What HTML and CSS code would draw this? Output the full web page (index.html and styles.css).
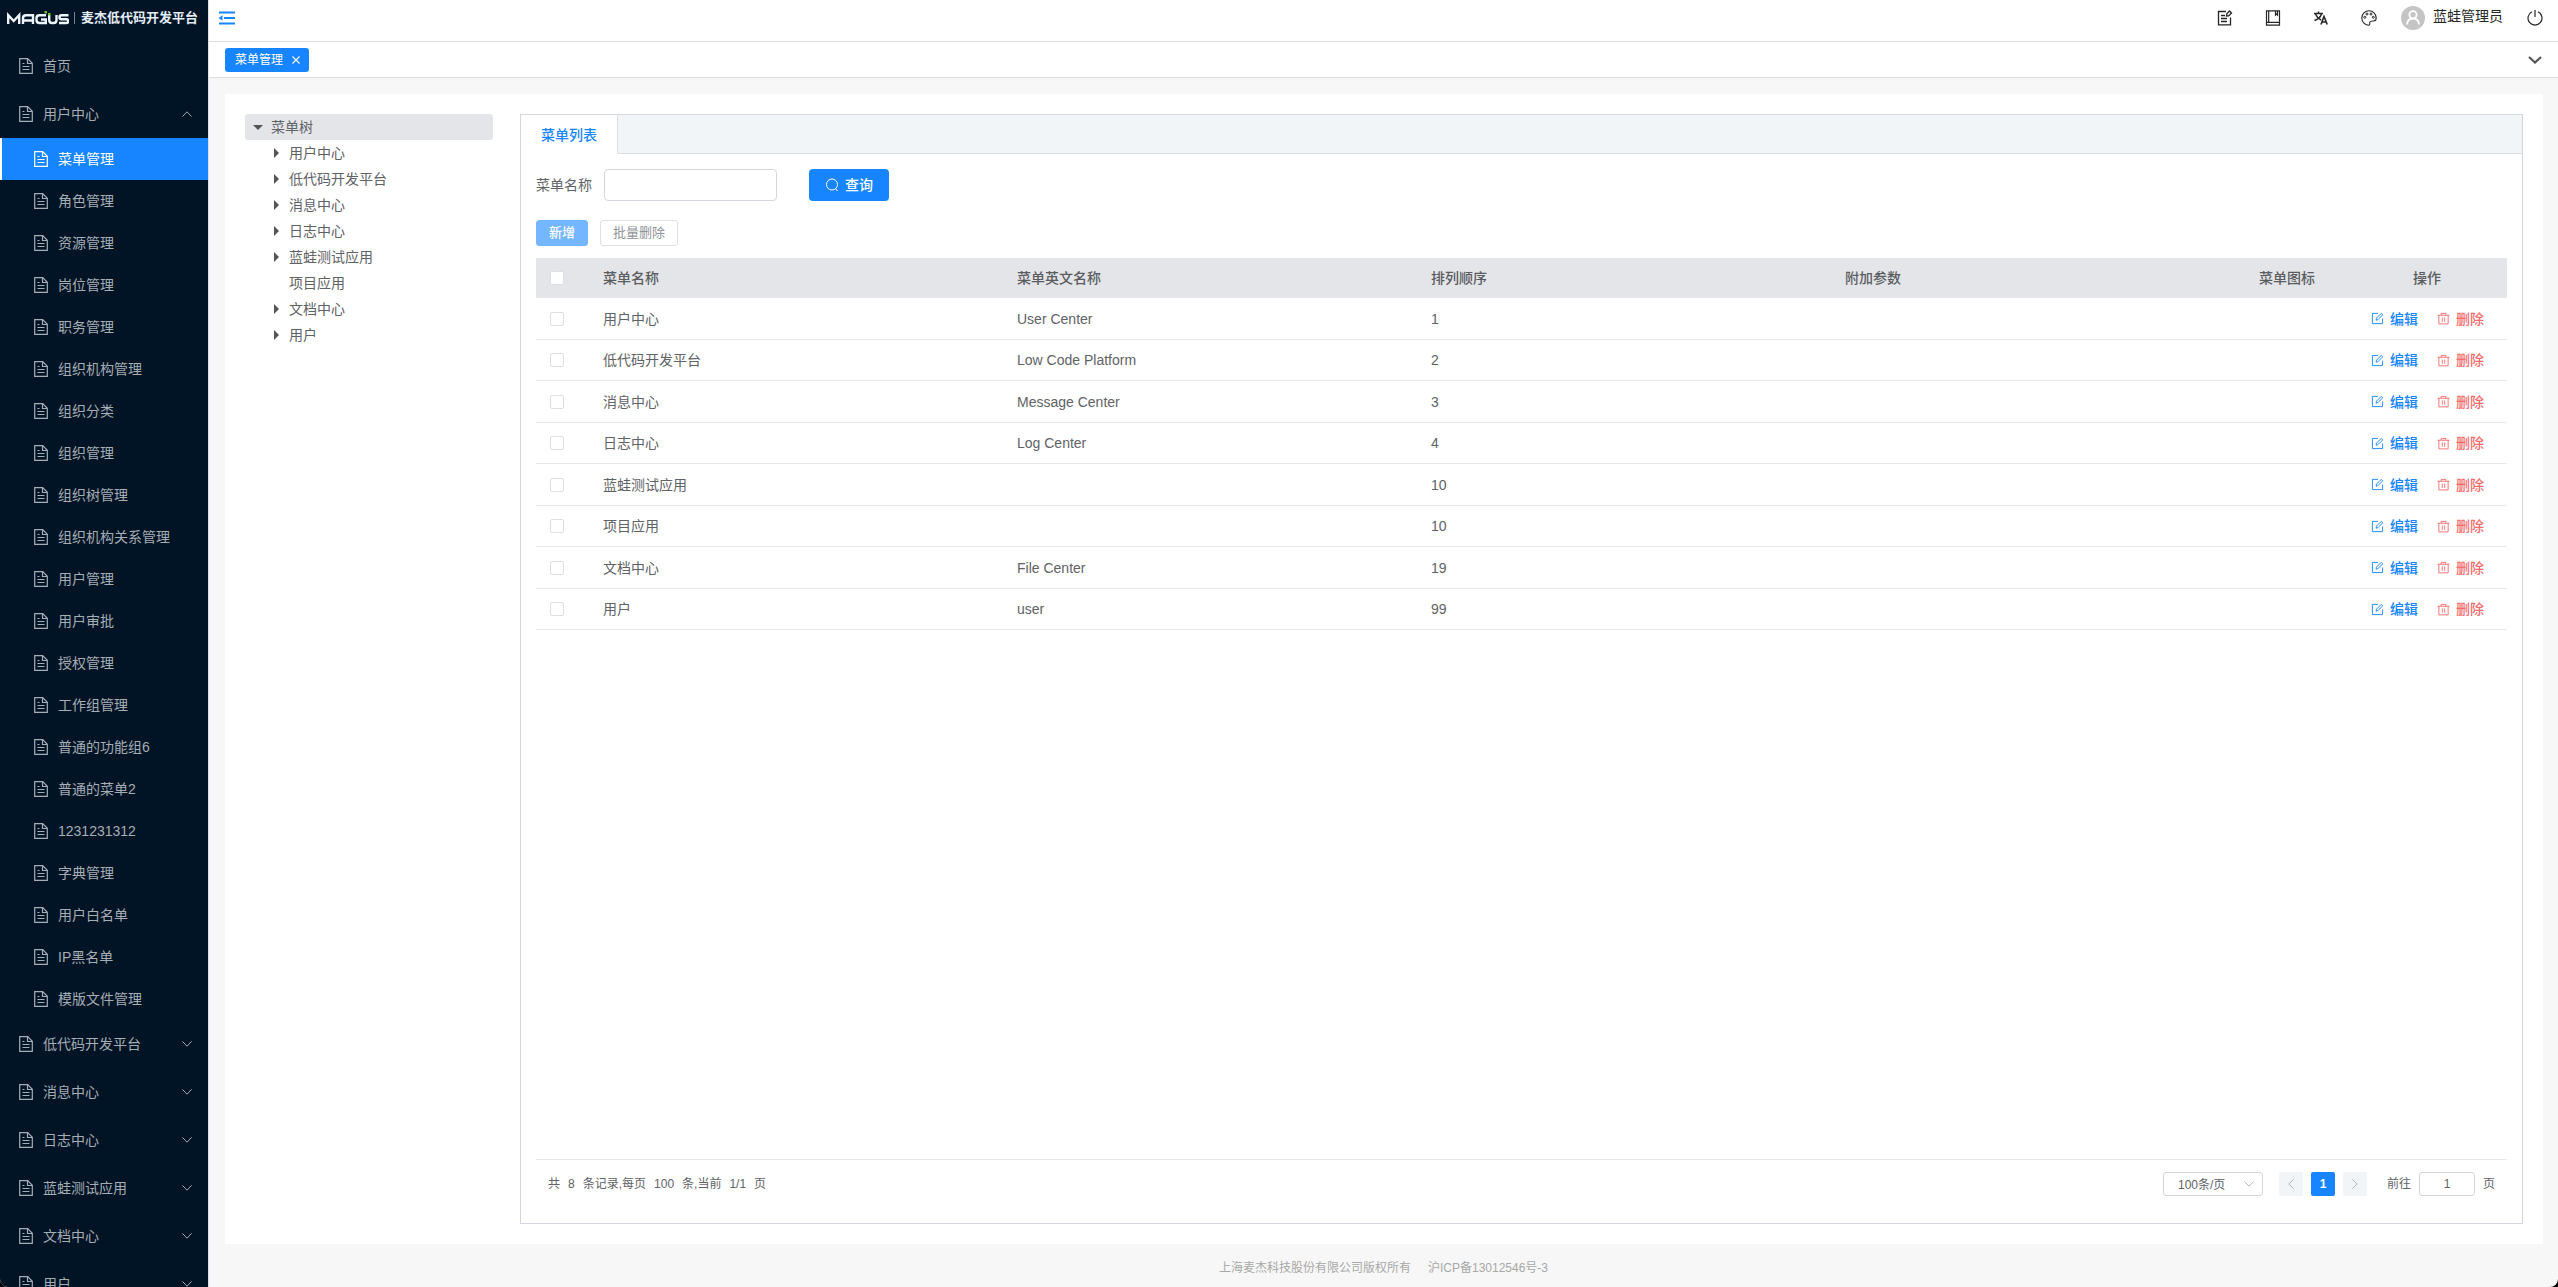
FILE: index.html
```html
<!DOCTYPE html>
<html lang="zh-CN">
<head>
<meta charset="utf-8">
<title>菜单管理</title>
<link rel="stylesheet" href="styles.css">
</head>
<body>
<svg class="sprite" aria-hidden="true">
  <symbol id="doc" viewBox="0 0 16 18"><path d="M1.700 1.700h8l4.600 4.600v10H1.700zM9.500 1.700v4.800h4.800M4.500 6.500h2M4.500 9.500h7M4.500 12.500h7" fill="none" stroke="currentColor" stroke-width="1.200"/></symbol>
  <symbol id="down" viewBox="0 0 12 12"><path d="M1.500 3.500 6 8.200l4.500-4.700" fill="none" stroke="currentColor"/></symbol>
  <symbol id="edit" viewBox="0 0 14 14"><path d="M7.500 1.500h-6v11h11V7M5.500 8.800l.4-2.200L11 1.500l1.600 1.600-5.200 5.200z" fill="none" stroke="currentColor"/></symbol>
  <symbol id="trash" viewBox="0 0 14 14"><path d="M.5 3.500h13M4.500 3.500v-2h5v2M2 3.500v9.300h10V3.500M5.700 6v4.500M8.300 6v4.500" fill="none" stroke="currentColor"/></symbol>
</svg>
<div class="app">
  <aside class="sidebar">
    <div class="logo">
      <svg class="mark" viewBox="0 0 62 14" aria-label="MAGUS"><g fill="none" stroke="#eef4fb" stroke-width="2.400"><path d="M1.200 13V4l5.500 6 5.500-6v9M16 13V7q0-2.800 3-2.800h7V13M16 9.500h10M39 4.200h-6.500q-3 0-3 3v1.800q0 3 3 3h6.300V8.500H34M42.200 4v5q0 3 3 3h1.300q3 0 3-3V4M61.500 4.200h-7q-2 0-2 2t2 2h4.800q2 0 2 1.900t-2 1.900H52"/></g><path d="M37.500 0h2.500v2.500h-2.500zM41 2h2.500v2.500H41z" fill="#6cc02a"/></svg>
      <span class="bar"></span><span class="brand">麦杰低代码开发平台</span>
    </div>
    <nav id="nav"></nav>
  </aside>
  <div class="main">
    <header class="topbar">
      <button class="plain fold" aria-label="收起菜单"><svg width="18" height="14" viewBox="0 0 18 14"><path d="M1 1.500h16M6 7h11M1 12.500h16" stroke="currentColor" stroke-width="2.200"/><path d="M0.500 7 4.500 4.300v5.400z" fill="currentColor"/></svg></button>
      <div class="tools">
        <button class="plain" aria-label="编辑"><svg width="16" height="16" viewBox="0 0 16 16"><path d="M9 1.500H1.500v13.300h12V7.500M4 5.500h4M4 8.500h6M4 11.500h6M9.500 6l.3-2.200L12.500 1l2 2-2.800 2.800z" fill="none" stroke="currentColor" stroke-width="1.300"/></svg></button>
        <button class="plain" aria-label="文档"><svg width="16" height="16" viewBox="0 0 16 16"><path d="M1.500.8h13v14.400h-13zM3.700.8v11.500M1.500 12.300h13M10.500 1v4l1-1 1 1V1" fill="none" stroke="currentColor" stroke-width="1.200"/></svg></button>
        <button class="plain" aria-label="语言"><svg width="16" height="16" viewBox="0 0 16 16"><path d="M1 3.500h9M5.500 1.500v2M2.500 4q1.500 4 5.500 6M8.500 4Q7 8.500 1.500 10.500" fill="none" stroke="currentColor" stroke-width="1.500"/><path d="m8 14.500 3-8 3.200 8M9 12h4.200" fill="none" stroke="currentColor" stroke-width="1.600"/></svg></button>
        <button class="plain" aria-label="主题"><svg width="16" height="16" viewBox="0 0 16 16"><path d="M8 .8a7.200 7.200 0 1 0 0 14.400c1.500-.5.500-2 .8-3 .5-1.500 2.200-1.200 3.700-1.200 1.700 0 2.700-1 2.700-3A7.200 7.200 0 0 0 8 .8z" fill="none" stroke="currentColor" stroke-width="1.100"/><g fill="none" stroke="currentColor"><circle cx="3.800" cy="7.300" r="1"/><circle cx="6" cy="4" r="1"/><circle cx="10" cy="4" r="1"/><circle cx="12.300" cy="7.300" r="1"/></g></svg></button>
        <div class="user"><svg width="24" height="24" viewBox="0 0 24 24"><circle cx="12" cy="12" r="12" fill="#c4c4c4"/><path d="M6 18.500q.5-6 6-6t6 6" fill="none" stroke="#fff" stroke-width="1.800"/><circle cx="12" cy="8.800" r="3.600" fill="#c4c4c4" stroke="#fff" stroke-width="1.800"/></svg><span>蓝蛙管理员</span></div>
        <button class="plain" aria-label="退出"><svg width="16" height="16" viewBox="0 0 16 16"><path d="M5 1.800a7 7 0 1 0 6 0M8 0v7" fill="none" stroke="currentColor" stroke-width="1.200"/></svg></button>
      </div>
    </header>
    <div class="tags">
      <div class="tag"><span>菜单管理</span><button class="plain" aria-label="关闭"><svg width="8" height="8" viewBox="0 0 8 8"><path d="m.5.500 7 7M7.500.500l-7 7" stroke="currentColor" stroke-width="1.200"/></svg></button></div>
      <button class="plain more" aria-label="更多"><svg width="14" height="8" viewBox="0 0 14 8"><path d="m1 1 6 5.500L13 1" fill="none" stroke="currentColor" stroke-width="2.200"/></svg></button>
    </div>
    <main class="page">
      <ul class="tree" id="tree"></ul>
      <section class="card">
        <div class="tabs"><button class="tab">菜单列表</button></div>
        <div class="body">
          <form class="query">
            <label for="name">菜单名称</label><input id="name" type="text">
            <button type="button" class="search"><svg width="14" height="14" viewBox="0 0 14 14"><circle cx="7" cy="6.500" r="5.500" fill="none" stroke="currentColor"/><path d="m10.500 10.500 2 2.500" stroke="currentColor"/></svg>查询</button>
          </form>
          <div class="actions"><button class="add" disabled>新增</button><button class="bulk" disabled>批量删除</button></div>
          <table>
            <colgroup><col class="c-check"><col><col><col><col><col class="c-icon"><col class="c-op"></colgroup>
            <thead><tr><th class="check"><input type="checkbox" aria-label="全选"></th><th>菜单名称</th><th>菜单英文名称</th><th>排列顺序</th><th>附加参数</th><th>菜单图标</th><th class="op">操作</th></tr></thead>
            <tbody id="rows"></tbody>
          </table>
          <div class="pager">
            <div class="summary"><span>共</span><span>8</span><span>条记录,每页</span><span>100</span><span>条,当前</span><span>1/1</span><span>页</span></div>
            <div class="size"><select aria-label="每页条数"><option>100条/页</option></select><svg width="12" height="12"><use href="#down"/></svg></div>
            <div class="pages">
              <button disabled aria-label="上一页"><svg class="left" width="12" height="12"><use href="#down"/></svg></button><button class="on">1</button><button disabled aria-label="下一页"><svg class="right" width="12" height="12"><use href="#down"/></svg></button>
            </div>
            <div class="jump"><label for="jump">前往</label><input id="jump" type="text" value="1"><span>页</span></div>
          </div>
        </div>
      </section>
    </main>
    <footer><span>上海麦杰科技股份有限公司版权所有</span><a href="#">沪ICP备13012546号-3</a></footer>
  </div>
</div>
<script src="app.js"></script>
</body>
</html>
```
FILE: styles.css
```css
*, ::before { box-sizing: border-box; }
html { background: #000; }
body { margin: 0; font: 14px/20px "Liberation Sans", "Noto Sans CJK SC", sans-serif; color: #606266; }
button, input, select { font: inherit; color: inherit; }
button { padding: 0; border: 0; background: none; }
svg { display: block; flex: none; }
a { color: inherit; text-decoration: none; }
.sprite { display: none; }
.app { display: flex; height: 100vh; overflow: hidden; border-radius: 0 0 8px 8px; background: #f7f7f7; }

.sidebar { flex: none; width: 208px; overflow: hidden; background: #001426; color: #a6adb4; }
.logo { display: flex; align-items: center; height: 42px; padding: 0 7px 6px; color: #e4edf7; }
.mark { width: 62px; height: 14px; }
.bar { width: 1px; height: 12px; margin: 0 6px 0 5px; background: #77818c; }
.brand { font-size: 13px; font-weight: 700; white-space: nowrap; }
.item { display: flex; align-items: center; gap: 9px; height: 48px; padding: 0 15px 0 18px; }
.item .doc { width: 16px; height: 18px; }
.item .arrow { width: 12px; height: 12px; margin-left: auto; }
.item .up { transform: rotate(180deg); }
.item.sub { height: 42px; padding-left: 33px; }
.item.active { padding-left: 31px; border-left: 2px solid #fff; background: #1785ff; color: #fff; }

.main { display: flex; flex: 1; flex-direction: column; min-width: 0; border-left: 1px solid #dcdfe6; }
.topbar { display: flex; flex: none; justify-content: space-between; height: 42px; padding: 0 15px 6px 9px; border-bottom: 1px solid #dcdfe6; background: #fff; }
.plain { display: flex; align-items: center; justify-content: center; }
.fold { color: #1785ff; }
.tools { display: flex; align-items: center; gap: 32px; color: #262626; }
.user { display: flex; align-items: center; gap: 8px; margin: 0 -8px; }
.user span { padding-bottom: 3px; }
.tags { display: flex; flex: none; align-items: center; justify-content: space-between; height: 36px; padding: 0 16px; border-bottom: 1px solid #dcdfe6; background: #fff; }
.tag { display: flex; align-items: center; gap: 9px; height: 24px; padding: 0 9px 0 10px; border-radius: 3px; background: #1785ff; color: #fff; font-size: 12px; }
.more { color: #555; }

.page { display: flex; flex: 1; gap: 27px; min-height: 0; margin: 16px 15px 0 16px; padding: 20px; background: #fff; }
.tree { flex: none; width: 248px; margin: 0; padding: 0; list-style: none; }
.tree li { display: flex; align-items: center; gap: 10px; height: 26px; padding-left: 29px; }
.tree li::before { width: 5px; content: ""; }
.tree li.branch::before { border: solid transparent; border-width: 5px 0 5px 5px; border-left-color: #555; }
.tree li.root { gap: 8px; padding-left: 8px; border-radius: 3px; background: #e4e5e9; }
.tree li.root::before { width: 10px; border: solid transparent; border-width: 5px 5px 0; border-top-color: #555; }
.card { display: flex; flex: 1; flex-direction: column; min-width: 0; border: 1px solid #d5d7e0; }
.tabs { flex: none; height: 39px; border-bottom: 1px solid #dcdfe6; background: #f1f5f8; }
.tab { height: 39px; padding: 0 20px; border-right: 1px solid #dcdfe6; background: #fff; color: #1785ff; font-weight: 500; }
.body { display: flex; flex: 1; flex-direction: column; min-height: 0; padding: 15px; }
.query { display: flex; align-items: center; height: 32px; }
.query input { width: 173px; height: 32px; margin: 0 32px 0 12px; border: 1px solid #d5d7e0; border-radius: 4px; }
.search { display: flex; align-items: center; justify-content: center; gap: 6px; width: 80px; height: 32px; border-radius: 4px; background: #1785ff; color: #fff; font-weight: 500; }
.actions { display: flex; gap: 12px; margin: 19px 0 12px; font-size: 13px; }
.actions button { height: 26px; padding: 0 12px; border: 1px solid #dcdfe6; border-radius: 3px; color: #909399; }
.actions .add { border-color: #74b6ff; background: #74b6ff; color: #fff; font-weight: 500; }

table { width: 100%; table-layout: fixed; border-collapse: separate; border-spacing: 0; }
.c-check { width: 55px; } .c-icon { width: 100px; } .c-op { width: 160px; }
th, td { height: 42px; padding: 0 12px; border-bottom: 1px solid #e6e8f0; text-align: left; }
tbody tr:nth-child(even) td { height: 41px; }
th { height: 40px; background: #e4e5e9; font-weight: 500; color: #5a5c60; }
.check { padding: 0 0 0 14px; }
input[type=checkbox] { display: block; width: 14px; height: 14px; margin: 0; appearance: none; border: 1px solid #dcdfe6; border-radius: 2px; background: #fff; }
th.op { text-align: center; }
.ops { display: flex; gap: 19px; padding-left: 12px; }
.ops button { display: flex; align-items: center; gap: 6px; color: #1785ff; font-weight: 500; }
.ops svg { width: 13px; height: 13px; }
.ops button.del { color: #f56c6c; }

.pager { display: flex; align-items: flex-start; height: 49px; margin-top: auto; padding: 12px 12px 0; border-top: 1px solid #e6e8f0; font-size: 12px; line-height: 24px; }
.summary { display: flex; flex: 1; gap: 8px; }
.size { position: relative; }
.size select { display: block; width: 100px; height: 24px; padding: 0 14px; appearance: none; border: 1px solid #d5d7e0; border-radius: 3px; background: #fff; }
.size svg { position: absolute; top: 6px; right: 8px; color: #b4b8bf; }
.pages { display: flex; gap: 8px; margin: 0 20px 0 16px; }
.pages button { display: flex; align-items: center; justify-content: center; width: 24px; height: 24px; border-radius: 2px; background: #f1f5f8; color: #b4b8bf; }
.pages button.on { background: #1785ff; color: #fff; font-weight: 700; }
.left { transform: rotate(90deg); } .right { transform: rotate(-90deg); }
.jump { display: flex; gap: 8px; }
.jump input { width: 56px; height: 24px; padding: 0; border: 1px solid #d5d7e0; border-radius: 3px; text-align: center; }
footer { display: flex; flex: none; align-items: center; justify-content: center; gap: 17px; height: 43px; padding-top: 4px; color: #a8a8a8; font-size: 12px; }
```
FILE: app.js
```js
const children = ['菜单管理', '角色管理', '资源管理', '岗位管理', '职务管理', '组织机构管理', '组织分类', '组织管理', '组织树管理', '组织机构关系管理', '用户管理', '用户审批', '授权管理', '工作组管理', '普通的功能组6', '普通的菜单2', '1231231312', '字典管理', '用户白名单', 'IP黑名单', '模版文件管理'];
const groups = ['低代码开发平台', '消息中心', '日志中心', '蓝蛙测试应用', '文档中心', '用户'];
const item = (text, cls, arrow) => `<a href="#" class="item ${cls}"><svg class="doc"><use href="#doc"/></svg>${text}${arrow ? `<svg class="arrow ${arrow}"><use href="#down"/></svg>` : ''}</a>`;
document.getElementById('nav').innerHTML = item('首页', '', '') + item('用户中心', '', 'up')
  + children.map((t, i) => item(t, i ? 'sub' : 'sub active', '')).join('')
  + groups.map(t => item(t, '', 'down')).join('');

const data = [['用户中心', 'User Center', 1], ['低代码开发平台', 'Low Code Platform', 2], ['消息中心', 'Message Center', 3], ['日志中心', 'Log Center', 4], ['蓝蛙测试应用', '', 10], ['项目应用', '', 10], ['文档中心', 'File Center', 19], ['用户', 'user', 99]];
document.getElementById('tree').innerHTML = '<li class="root">菜单树</li>' + data.map(([n]) => `<li class="${n === '项目应用' ? 'leaf' : 'branch'}">${n}</li>`).join('');
document.getElementById('rows').innerHTML = data.map(([n, e, o]) => `<tr><td class="check"><input type="checkbox" aria-label="${n}"></td><td>${n}</td><td>${e}</td><td>${o}</td><td></td><td></td><td><div class="ops"><button><svg><use href="#edit"/></svg>编辑</button><button class="del"><svg><use href="#trash"/></svg>删除</button></div></td></tr>`).join('');
```
